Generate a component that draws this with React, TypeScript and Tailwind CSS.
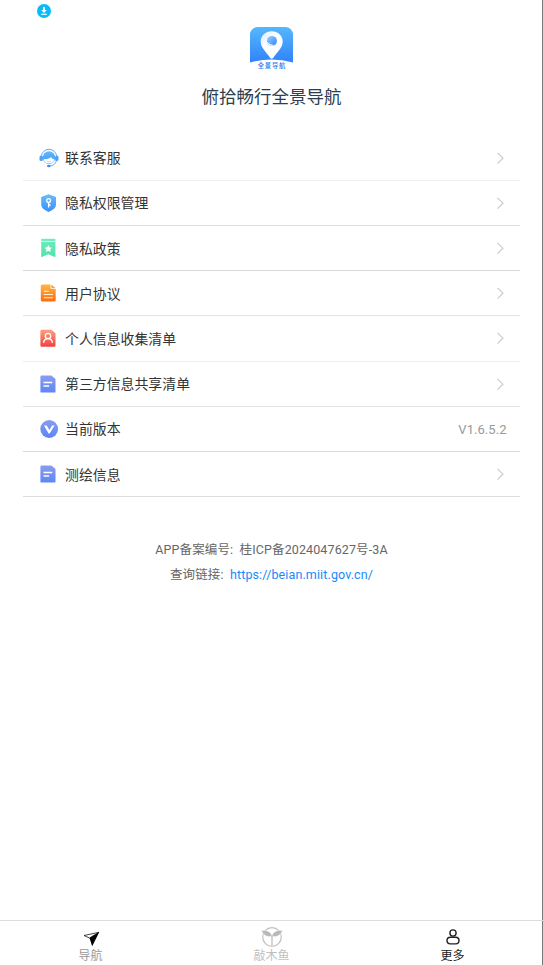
import type { ReactNode } from 'react';

function HeadsetIcon() {
  return (
    <svg width="20" height="20" viewBox="0 0 20 20" fill="none">
      <defs>
        <linearGradient id="headset" x1="0" y1="0" x2="0" y2="1">
          <stop stopColor="#62b9fb" />
          <stop offset="1" stopColor="#3b93fa" />
        </linearGradient>
      </defs>
      <path d="M2.400 7.800a7.700 7.700 0 0 1 15.200 0" stroke="#55aefb" strokeWidth="1" />
      <rect x="0.500" y="7.400" width="3.400" height="5.600" rx="1.600" fill="#4aa2fa" />
      <rect x="16.100" y="7.400" width="3.400" height="5.600" rx="1.600" fill="#4aa2fa" />
      <circle cx="10" cy="9.600" r="6.300" fill="url(#headset)" />
      <path d="M4.600 11.200c3.400 0 6-.7 7.400-2.200.6 1.200 1.700 1.900 3.400 2.200-.5 2.900-2.600 4.400-5.400 4.400s-4.900-1.500-5.400-4.400Z" fill="#fff" />
      <path d="M8 13.200q2 1.300 4 0" stroke="#8fc7fc" strokeWidth=".7" />
      <path d="M17.300 13c-.8 2.900-3 4.700-6.300 5.100" stroke="#4aa2fa" strokeWidth=".9" />
      <ellipse cx="9.800" cy="18" rx="1.800" ry="1.200" fill="#398ffa" />
    </svg>
  );
}

function ShieldIcon() {
  return (
    <svg width="20" height="20" viewBox="0 0 20 20" fill="none">
      <defs>
        <linearGradient id="shield" x1="0" y1="0" x2="0" y2="1">
          <stop stopColor="#65bdfc" />
          <stop offset="1" stopColor="#3a8ffb" />
        </linearGradient>
      </defs>
      <path d="M9.600 1.300 17 4v7.500c0 3.600-3.500 5.700-7.400 7.600-3.900-1.900-7.400-4-7.400-7.600V4Z" fill="url(#shield)" />
      <circle cx="9.600" cy="7.600" r="1.900" stroke="#fff" strokeWidth="1.300" />
      <path d="M9.600 9.500v5M9.600 12h2" stroke="#fff" strokeWidth="1.300" />
    </svg>
  );
}

function BookmarkIcon() {
  return (
    <svg width="20" height="20" viewBox="0 0 20 20" fill="none">
      <defs>
        <linearGradient id="bookmark" x1="0" y1="0" x2="0" y2="1">
          <stop stopColor="#69eaba" />
          <stop offset="1" stopColor="#4fe3ae" />
        </linearGradient>
      </defs>
      <path d="M2.200 3.800h14.200v15.400l-7.100-2.900-7.100 2.900Z" fill="url(#bookmark)" />
      <path d="M2.200 .8h14.200v2.200H2.200Z" fill="#72ebc0" />
      <path d="m9.300 7 1.200 2.300 2.500.4-1.800 1.800.4 2.500-2.300-1.200L7 14l.4-2.500-1.800-1.800 2.500-.4Z" fill="#fff" />
    </svg>
  );
}

function AgreementIcon() {
  return (
    <svg width="20" height="20" viewBox="0 0 20 20" fill="none">
      <defs>
        <linearGradient id="agreement" x1="0" y1="0" x2="0" y2="1">
          <stop stopColor="#ffb646" />
          <stop offset="1" stopColor="#fe6a0c" />
        </linearGradient>
      </defs>
      <path d="M3.300 1.500h8.200v3.300a1.300 1.300 0 0 0 1.300 1.300h3.900v11a1.500 1.500 0 0 1-1.500 1.500H3.300a1.500 1.500 0 0 1-1.500-1.500V3a1.500 1.500 0 0 1 1.500-1.500Z" fill="url(#agreement)" />
      <path d="M12.300 1.500 16.700 5.300H13a.7.7 0 0 1-.7-.7Z" fill="#ffa12f" />
      <path d="M4.800 8.300h5M4.800 11.500H14M4.800 14.700H14" stroke="#fff0dc" strokeWidth="1.100" />
    </svg>
  );
}

function PersonalIcon() {
  return (
    <svg width="20" height="20" viewBox="0 0 20 20" fill="none">
      <defs>
        <linearGradient id="personal" x1="0" y1="0" x2="0" y2="1">
          <stop stopColor="#fca080" />
          <stop offset="1" stopColor="#f3403f" />
        </linearGradient>
      </defs>
      <path d="M2.600 1.700h9.800L16.500 5.200v12.400a1.200 1.200 0 0 1-1.200 1.200H2.600a1.200 1.200 0 0 1-1.200-1.200V2.900a1.200 1.200 0 0 1 1.200-1.200Z" fill="url(#personal)" />
      <circle cx="9" cy="8" r="2.700" stroke="#fff" strokeWidth="1.300" />
      <path d="M4.600 14.900c.2-2.700 1.700-4.300 4.400-4.300s4.200 1.600 4.400 4.300" stroke="#fff" strokeWidth="1.300" />
    </svg>
  );
}

function DocumentIcon() {
  return (
    <svg width="20" height="20" viewBox="0 0 20 20" fill="none">
      <defs>
        <linearGradient id="document" x1="0" y1="0" x2="0" y2="1">
          <stop stopColor="#899dee" />
          <stop offset="1" stopColor="#5e85fb" />
        </linearGradient>
      </defs>
      <path d="M2.600 1.500h9.800L16.500 5v12.400a1.200 1.200 0 0 1-1.200 1.200H2.600a1.200 1.200 0 0 1-1.200-1.200V2.700a1.200 1.200 0 0 1 1.200-1.200Z" fill="url(#document)" />
      <path d="M4.500 8.500h8.800M4.500 12.100h5.600" stroke="#fff" strokeWidth="1.500" />
    </svg>
  );
}

function VersionIcon() {
  return (
    <svg width="20" height="20" viewBox="0 0 20 20" fill="none">
      <defs>
        <linearGradient id="version" x1="0" y1="0" x2="0" y2="1">
          <stop stopColor="#899dee" />
          <stop offset="1" stopColor="#5b85fb" />
        </linearGradient>
      </defs>
      <circle cx="10.200" cy="10" r="8.900" fill="url(#version)" />
      <path d="M5 6.500h2.700l2.700 4.600 2.700-4.600h2.500l-5 8.100h-1Z" fill="#fff" />
    </svg>
  );
}

type Item = { label: string; icon: ReactNode; line: string; value?: string };

const items: Item[] = [
  { label: '联系客服', icon: <HeadsetIcon />, line: 'border-[#eeeeee]' },
  { label: '隐私权限管理', icon: <ShieldIcon />, line: 'border-[#dddddd]' },
  { label: '隐私政策', icon: <BookmarkIcon />, line: 'border-[#d8d8d8]' },
  { label: '用户协议', icon: <AgreementIcon />, line: 'border-[#e2e2e2]' },
  { label: '个人信息收集清单', icon: <PersonalIcon />, line: 'border-[#eeeeee]' },
  { label: '第三方信息共享清单', icon: <DocumentIcon />, line: 'border-[#e5e5e5]' },
  { label: '当前版本', icon: <VersionIcon />, line: 'border-[#d9d9d9]', value: 'V1.6.5.2' },
  { label: '测绘信息', icon: <DocumentIcon />, line: 'border-[#dddddd]' },
];

function AppLogo() {
  return (
    <svg width="43" height="44" viewBox="0 0 43 44" fill="none">
      <defs>
        <linearGradient id="logo" x1="0" y1="0" x2="0" y2="1">
          <stop stopColor="#55b8fc" />
          <stop offset="1" stopColor="#3083fb" />
        </linearGradient>
        <linearGradient id="pin" x1="0" y1="0" x2="1" y2="1">
          <stop stopColor="#d5ebff" />
          <stop offset=".4" stopColor="#fff" />
        </linearGradient>
        <linearGradient id="hole" x1="0" y1="0" x2="1" y2="1">
          <stop stopColor="#9bcffc" />
          <stop offset="1" stopColor="#2f86fa" />
        </linearGradient>
      </defs>
      <path d="M7.500 0h28a7.500 7.500 0 0 1 7.500 7.500v28Q21.500 29.500 0 35.500v-28A7.500 7.500 0 0 1 7.500 0Z" fill="url(#logo)" />
      <path d="M21.700 4.300c-6.300 0-11 4.500-11 10.300 0 6.700 6.500 11.500 9.500 16.300q1.500 1.500 3 0c3-4.800 9.500-9.600 9.500-16.300 0-5.800-4.700-10.300-11-10.300Z" fill="url(#pin)" />
      <circle cx="21.900" cy="13.900" r="5" fill="url(#hole)" />
      <path d="M16.700 14.600c.8 3.300 4.500 5.400 8 3.500-2.600.1-5.300-.8-8-3.500Z" fill="#fff" />
      <text x="21.900" y="41.200" textAnchor="middle" fill="#2777ee" fontSize="6.300" fontWeight="500" letterSpacing=".75" fontFamily="'Noto Sans CJK SC', sans-serif">全景导航</text>
    </svg>
  );
}

export default function App() {
  return (
    <div className="flex h-[965px] w-[543px] flex-col bg-white font-[Roboto,'Noto_Sans_CJK_SC',sans-serif] text-[#333333] shadow-[inset_-1px_0_0_#777777]">
      <header className="flex h-[135.600px] flex-col items-center">
        <div className="flex h-[27px] w-full pt-1 pl-[37px]">
          <svg width="14" height="14" viewBox="0 0 14 14" fill="none">
            <circle cx="7" cy="7" r="7" fill="#08bcf8" />
            <path d="M7 3v4" stroke="#fff" strokeWidth="1.800" />
            <path d="M4.300 6h5.400L7 9Z" fill="#fff" />
            <path d="M4.300 10.300h5.400" stroke="#fff" strokeWidth="1.200" />
          </svg>
        </div>
        <AppLogo />
        <h1 className="mt-[13px] text-[17.500px] leading-[26px] text-[#2c3e50]">俯拾畅行全景导航</h1>
      </header>

      <main className="flex flex-1 flex-col">
        <ul className="mx-[23px]">
          {items.map((item) => (
            <li key={item.label} className={`flex h-[45.200px] items-center border-b pr-[13px] pl-4 ${item.line}`}>
              {item.icon}
              <span className="mt-px ml-[6px] text-[13.900px] leading-5">{item.label}</span>
              {item.value ? (
                <span className="mt-px mr-[0.500px] ml-auto text-[13px] tracking-[0.050px] text-[#999999]">{item.value}</span>
              ) : (
                <svg className="mr-px ml-auto" width="10" height="14" viewBox="0 0 10 14" fill="none">
                  <path d="M1.500 1.800 7 7.200l-5.500 5.400" stroke="#c8c8c8" strokeWidth="1.100" />
                </svg>
              )}
            </li>
          ))}
        </ul>
        <div className="mt-[40px] text-center text-[12.500px] leading-[25px] tracking-[0.120px] text-[#666666]">
          <p className="whitespace-pre">{'APP备案编号:  桂ICP备2024047627号-3A'}</p>
          <p className="whitespace-pre">查询链接:  <a className="text-[#1989fa]">https://beian.miit.gov.cn/</a></p>
        </div>
      </main>

      <nav className="grid h-[45px] grid-cols-3 border-t border-[#dddddd] text-[12px] leading-4">
        <div className="flex flex-col items-center pt-[7px] text-[#999999]">
          <svg width="20" height="20" viewBox="0 0 20 20" fill="none">
            <path d="M17.900 4.300 3 7.500l5.500 2.500Z" stroke="#111" strokeWidth=".8" />
            <path d="M18.300 4 8.500 10l2.700 8.300Z" fill="#000" />
          </svg>
          <span>导航</span>
        </div>
        <div className="flex flex-col items-center pt-[6px] text-[#bfbfbf]">
          <svg className="mb-px" width="22" height="20" viewBox="0 0 22 20" fill="none">
            <circle cx="11" cy="10" r="9.300" stroke="#bfbfbf" strokeWidth="1.200" />
            <path d="M.6 3.500c5-.6 9.200 1 10.400 5.200C12.200 4.500 16.400 2.900 21.400 3.500c-1.200 4.200-5 6.500-9.600 6v9.800h-1.600V9.500C5.600 10 1.800 7.700.6 3.500Z" fill="#b8b8b8" stroke="#fff" strokeWidth=".4" />
          </svg>
          <span>敲木鱼</span>
        </div>
        <div className="flex flex-col items-center pt-[7px] text-[#222222]">
          <svg width="20" height="20" viewBox="0 0 20 20" fill="none" stroke="#222" strokeWidth="1.400">
            <circle cx="10" cy="5" r="3.100" />
            <rect x="4" y="9.300" width="12" height="6.600" rx="3.300" />
          </svg>
          <span>更多</span>
        </div>
      </nav>
    </div>
  );
}
